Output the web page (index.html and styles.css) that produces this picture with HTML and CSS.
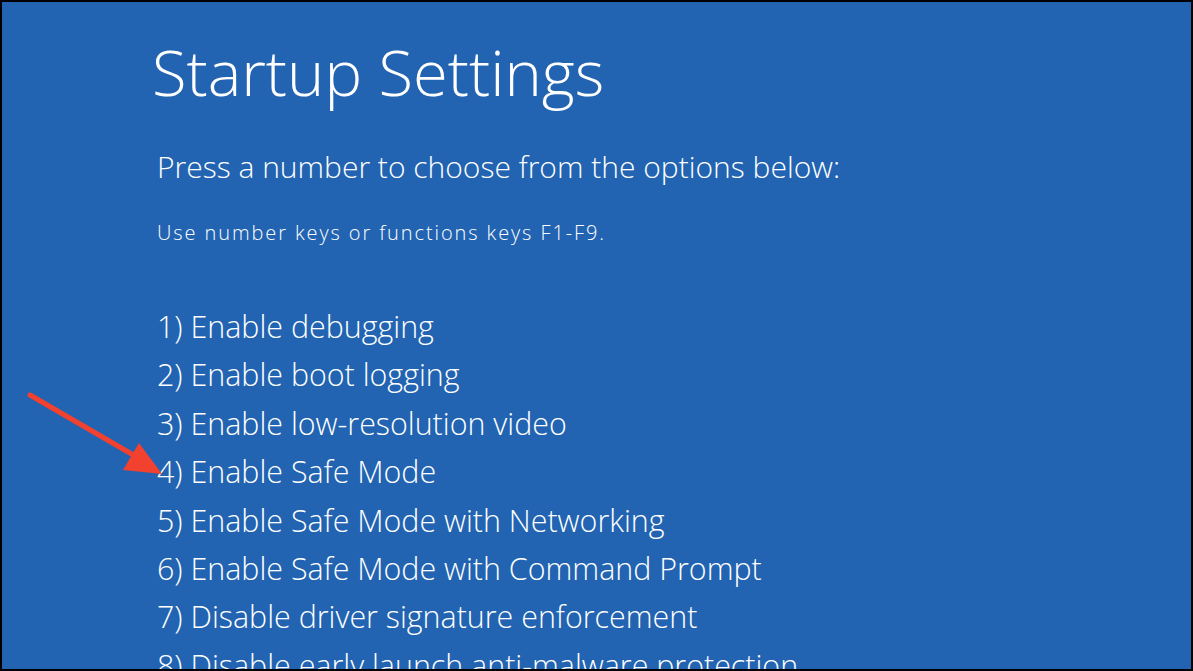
FILE: index.html
```html
<!DOCTYPE html>
<html lang="en">
<head>
    <meta charset="UTF-8">
    <title>Startup Settings</title>
    <link rel="stylesheet" href="styles.css">
</head>
<body>
    <div class="screen">
        <h1 class="title">Startup Settings</h1>
        <p class="prompt">Press a number to choose from the options below:</p>
        <p class="hint">Use number keys or functions keys F1-F9.</p>

        <!-- Boot options -->
        <ol class="options">
            <li>1) Enable debugging</li>
            <li>2) Enable boot logging</li>
            <li>3) Enable low-resolution video</li>
            <li>4) Enable Safe Mode</li>
            <li>5) Enable Safe Mode with Networking</li>
            <li>6) Enable Safe Mode with Command Prompt</li>
            <li>7) Disable driver signature enforcement</li>
            <li>8) Disable early launch anti-malware protection</li>
        </ol>

        <!-- Annotation arrow -->
        <svg class="arrow" width="170" height="110" viewBox="0 0 170 110">
            <line x1="28" y1="393" x2="140" y2="458" transform="translate(0,-380)" stroke="#f2412f" stroke-width="5" stroke-linecap="round"/>
            <polygon points="160,472 121,468 137,441" transform="translate(0,-380)" fill="#f2412f"/>
        </svg>
    </div>
</body>
</html>
```

FILE: styles.css
```css
html, body {
    margin: 0;
    padding: 0;
    background-color: #000;
}

body {
    width: 1193px;
    height: 671px;
    overflow: hidden;
}

.screen {
    position: relative;
    box-sizing: border-box;
    width: 1193px;
    height: 671px;
    border: 2px solid #000;
    background-color: #2264b2;
    color: #fff;
    font-family: "Open Sans", "Segoe UI", sans-serif;
    font-weight: 300;
    padding-left: 155px;
    overflow: hidden;
}

.title {
    margin: 0;
    padding-top: 28px;
    font-size: 63.3px;
    font-weight: 300;
    line-height: 84px;
    margin-left: -5px;
}

.prompt {
    margin: 0;
    margin-top: 33px;
    font-size: 30px;
    line-height: 40px;
}

.hint {
    margin: 0;
    margin-top: 33px;
    font-size: 20px;
    letter-spacing: 1.9px;
    line-height: 26px;
}

.options {
    list-style: none;
    margin: 0;
    padding: 0;
    margin-top: 57px;
    font-size: 30.4px;
}

.options li {
    line-height: 48.4px;
    white-space: nowrap;
}

.arrow {
    position: absolute;
    left: 0;
    top: 380px;
}
```
